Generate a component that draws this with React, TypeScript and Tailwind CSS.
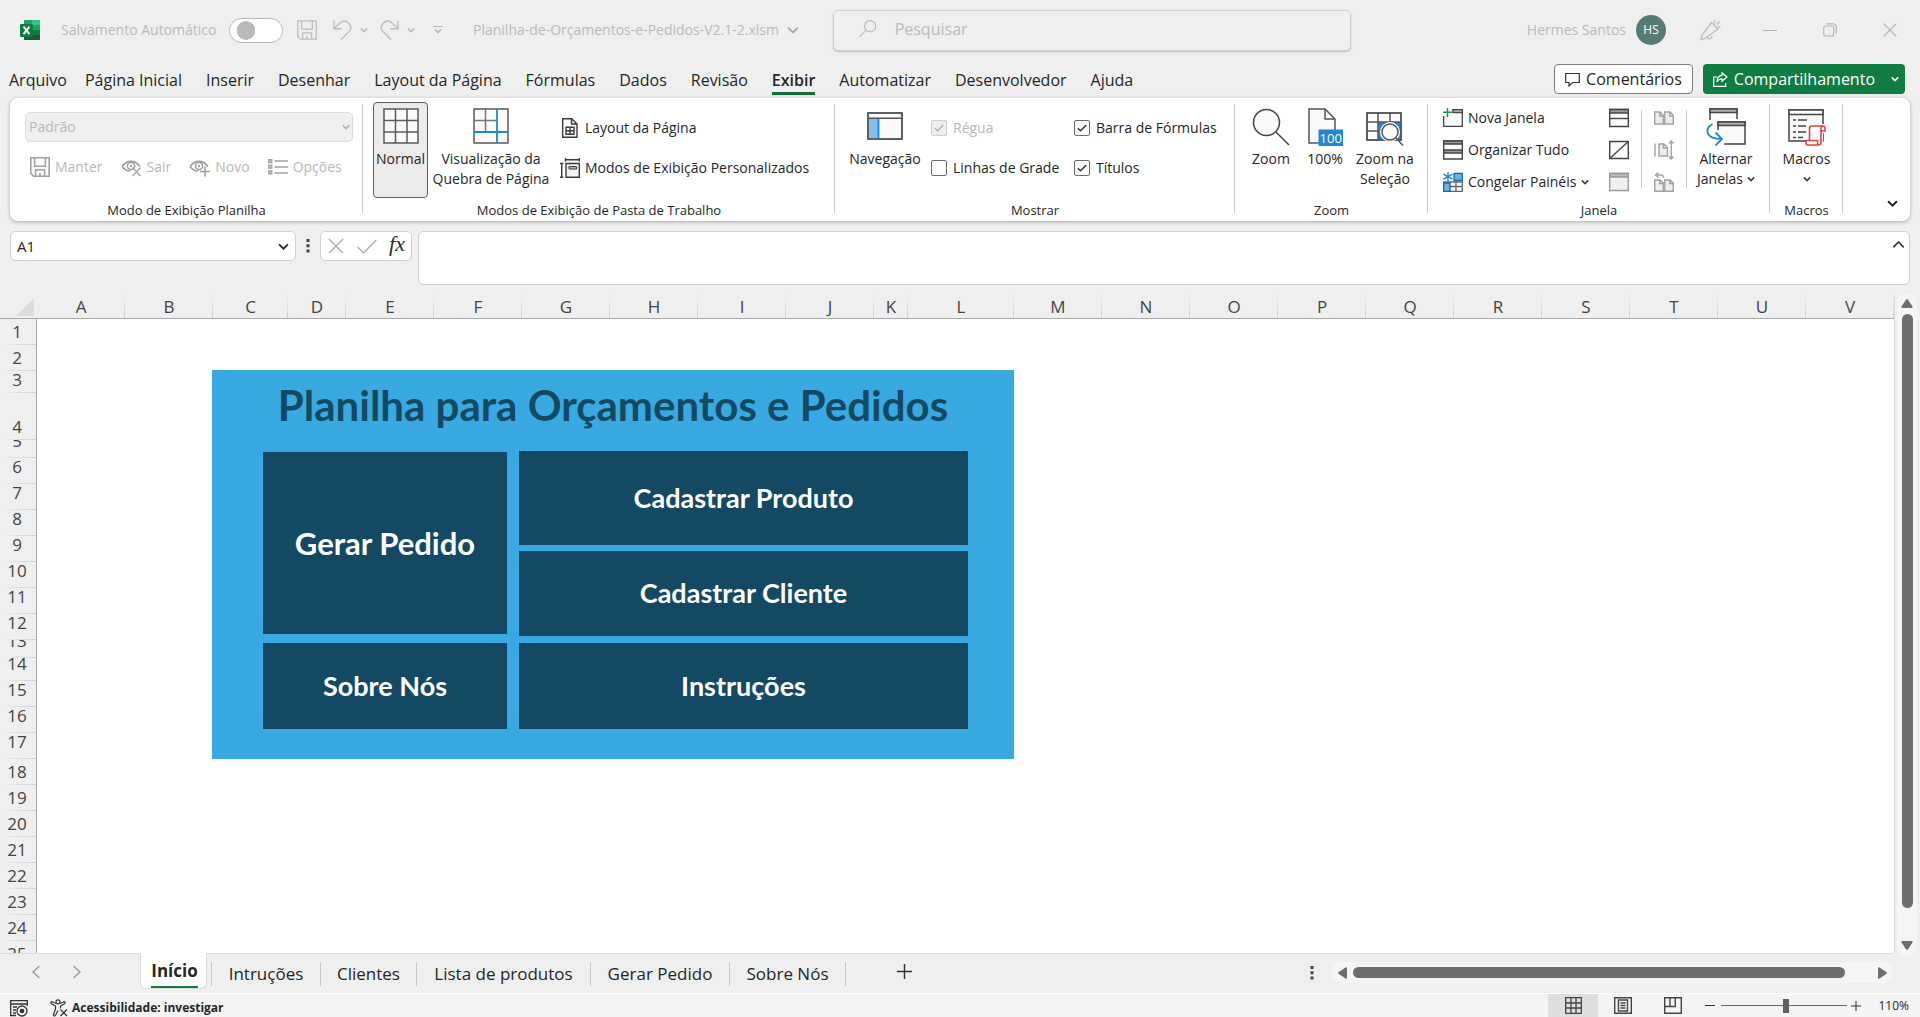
import { useState, type ReactNode } from "react";

const INK = "#3b3b3b";
const BLUE = "#1e88d2";

/* ---------- icons ---------- */

function Chevron({ size = 8, color = INK, width = 1.5, up = false }: { size?: number; color?: string; width?: number; up?: boolean }) {
  return (
    <svg width={size} height={size} viewBox="0 0 8 8" fill="none" stroke={color} strokeWidth={width} className="shrink-0" aria-hidden="true">
      <path d={up ? "M0.8 5.8 4 2.4l3.2 3.4" : "M0.8 2.4 4 5.6l3.2-3.2"} />
    </svg>
  );
}

function ExcelLogo() {
  return (
    <svg width="20" height="20" viewBox="0 0 20 20" aria-hidden="true">
      <rect x="4" y="0" width="16" height="20" rx="1" fill="#21a366" />
      <path d="M12 0h7a1 1 0 0 1 1 1v4h-8z" fill="#33c481" />
      <path d="M4 10h16v5H4z" fill="#107c41" />
      <path d="M4 15h16v4a1 1 0 0 1-1 1H5a1 1 0 0 1-1-1z" fill="#185c37" />
      <rect x="0" y="4" width="13" height="13" rx="1.2" fill="#107c41" />
      <path d="M3.6 6.7 9.4 14.2M9.4 6.7 3.6 14.2" stroke="#fff" strokeWidth="2" />
    </svg>
  );
}

function SaveIcon({ color = "#bdbdbd", width = 1.3 }: { color?: string; width?: number }) {
  return (
    <svg width="20" height="20" viewBox="0 0 20 20" fill="none" stroke={color} strokeWidth={width} aria-hidden="true">
      <path d="M.8.8h18.4v18.4H3.6L.8 16.4zM4.6.8v8.4h10.8V.8M5.6 19.2v-6.4h9v6.4M10 16v3" />
    </svg>
  );
}

function UndoIcon({ flip = false }: { flip?: boolean }) {
  return (
    <svg width="19" height="20" viewBox="0 0 19 20" fill="none" stroke="#bdbdbd" strokeWidth="1.4" className={flip ? "-scale-x-100" : ""} aria-hidden="true">
      <path d="M1 .5v8.3h8M1.3 8.3 7.5 2.6a6.3 6.3 0 0 1 9.2 8.3L8 19.6" />
    </svg>
  );
}

function EyeIcon({ mark }: { mark: "x" | "+" }) {
  return (
    <svg width="21" height="20" viewBox="0 0 21 20" fill="none" stroke="#a0a0a0" strokeWidth="1.6" aria-hidden="true">
      <path d="M1 9.5C4 5.5 7 4.4 10 4.4s6 1.1 9 5M1 9.500c2 2.600 4.500 4.300 8 4.700" />
      <circle cx="10" cy="9" r="3.6" />
      <circle cx="10" cy="9" r="1.2" fill="#a0a0a0" stroke="none" />
      {mark === "x" ? <path d="m11.500 10.500 8 8.500m0-8.500-8 8.500" strokeWidth="1.2" /> : <path d="M16 9.500v10M11 14.500h10" />}
    </svg>
  );
}

function ListIcon() {
  return (
    <svg width="20" height="20" viewBox="0 0 20 20" fill="none" stroke="#a0a0a0" strokeWidth="1.3" aria-hidden="true">
      <path d="M6.500 4H20M6.500 10H20M6.500 16H20" />
      <path d="M.8 2.600h3v3h-3zM.8 8.200h3v3h-3zM.8 13.800h3v3h-3z" fill="#c8c8c8" />
    </svg>
  );
}

function NormalViewIcon() {
  return (
    <svg width="36" height="36" viewBox="0 0 36 36" fill="#fafafa" stroke="#5a5a5a" strokeWidth="1.5" aria-hidden="true">
      <path d="M1 1h34v34H1z" />
      <path d="M12.500 1v34M24 1v34M1 12.500h34M1 24h34" />
    </svg>
  );
}

function PageBreakIcon() {
  return (
    <svg width="36" height="36" viewBox="0 0 36 36" fill="none" strokeWidth="1.5" aria-hidden="true">
      <path d="M1 1h34v34H1z" fill="#fafafa" stroke="#5a5a5a" />
      <path d="M12.500 1v22M1 12.500h22" stroke="#777" />
      <path d="M24 1v34M1 24h34" stroke={BLUE} strokeWidth="1.8" />
    </svg>
  );
}

function PageLayoutIcon() {
  return (
    <svg width="20" height="20" viewBox="0 0 20 20" fill="none" stroke={INK} strokeWidth="1.4" aria-hidden="true">
      <path d="M2.7.7h9l5.300 5.300v13.300H2.700zM11.500.7V6H17" />
      <path d="M6 9.300h8v7H6zM10 9.300v7M6 12.800h8" />
    </svg>
  );
}

function CustomViewsIcon() {
  return (
    <svg width="20" height="20" viewBox="0 0 20 20" fill="none" stroke={INK} strokeWidth="1.4" aria-hidden="true">
      <path d="M6 5.500h13.300v13.800H6z" fill="#f3f3f3" />
      <path d="M9 8.600h7.500v2.400H9z" fill="#bbb" strokeWidth="1" />
      <path d="M5.500 1.700h14M5.500 0v3.400M19.300 0v3.400M1.700 5v14.500M0 5.500h3.400M0 19.300h3.400" />
    </svg>
  );
}

function NavigationIcon() {
  return (
    <svg width="36" height="36" viewBox="0 0 36 36" fill="none" stroke="#555" strokeWidth="1.5" aria-hidden="true">
      <path d="M1 5h34v26H1z" fill="#fafafa" />
      <path d="M1.700 11h9.800v19.300H1.700z" fill="#83beec" stroke="none" />
      <path d="M11.500 10.500v20" stroke={BLUE} strokeWidth="1.8" />
      <path d="M1 10.300h34M1 5h34v26H1z" />
    </svg>
  );
}

function ZoomIcon() {
  return (
    <svg width="38" height="38" viewBox="0 0 38 38" fill="none" stroke="#444" strokeWidth="1.5" aria-hidden="true">
      <circle cx="14.500" cy="14.500" r="13" fill="#fafafa" />
      <path d="m24 24 13 13" />
    </svg>
  );
}

function Zoom100Icon() {
  return (
    <svg width="36" height="38" viewBox="0 0 36 38" fill="none" stroke="#555" strokeWidth="1.5" aria-hidden="true">
      <path d="M2 1h16l10 10v24H2z" fill="#fafafa" />
      <path d="M18 1v10h10" />
      <path d="M11.500 21.500H36V38H11.500z" fill={BLUE} stroke="none" />
      <text x="23.700" y="35" textAnchor="middle" fill="#fff" stroke="none" className="font-['Open_Sans',sans-serif] text-[13px]">100</text>
    </svg>
  );
}

function ZoomSelectionIcon() {
  return (
    <svg width="38" height="38" viewBox="0 0 38 38" fill="none" stroke="#555" strokeWidth="1.5" aria-hidden="true">
      <path d="M1 5h34v27H1z" fill="#fafafa" />
      <path d="M12 14h23v18H12z" fill={BLUE} stroke="none" />
      <path d="M12 5v27M24 5v9M1 14h34M1 23h11M1 5h34v27H1z" />
      <circle cx="24" cy="24" r="10" fill="#fff" stroke="none" />
      <circle cx="24" cy="24" r="8" fill="#fafafa" />
      <path d="m30 30 7 7.500" />
    </svg>
  );
}

function NewWindowIcon() {
  return (
    <svg width="20" height="20" viewBox="0 0 20 20" fill="none" stroke="#444" strokeWidth="1.3" aria-hidden="true">
      <path d="M9 1.700h10.300v16.600H.7V8" fill="#fafafa" />
      <path d="M10 1.700h9.300v3H10z" fill="#aaa" />
      <path d="M4.500 0v9M0 4.300h9" stroke="#1a9150" strokeWidth="1.5" />
    </svg>
  );
}

function ArrangeIcon() {
  return (
    <svg width="20" height="20" viewBox="0 0 20 20" fill="#fafafa" stroke="#444" strokeWidth="1.4" aria-hidden="true">
      <path d="M.7 1h18.600v18H.7z" />
      <path d="M.7 1h18.600v3H.7zM.7 10h18.600v3H.7z" fill="#999" />
    </svg>
  );
}

function FreezeIcon() {
  return (
    <svg width="20" height="20" viewBox="0 0 20 20" fill="none" stroke="#666" strokeWidth="1.3" aria-hidden="true">
      <path d="M.7 10h18.600v9.300H.7zM13 2v17M.7 14.500h18.600" fill="#fafafa" />
      <path d="M11 1.300h8.300v7H11zM.7 11H7v8.300H.7z" fill="#6db1e4" stroke="#1668a8" />
      <path d="M5 0v9.500M.5 2.200l9 5M9.500 2.200l-9 5" stroke={BLUE} strokeWidth="1.4" />
    </svg>
  );
}

function SplitIcon({ kind }: { kind: "split" | "hide" | "show" }) {
  const color = kind === "show" ? "#999" : "#444";
  return (
    <svg width="20" height="20" viewBox="0 0 20 20" fill={kind === "show" ? "#f0f0f0" : "#fafafa"} stroke={color} strokeWidth="1.4" aria-hidden="true">
      <path d="M.7 1.500h18.600v17H.7z" />
      {kind !== "hide" && <path d="M.7 1.500h18.600V5H.7z" fill={kind === "show" ? "#bbb" : "#999"} />}
      {kind === "split" && <path d="M.7 10.500h18.600" />}
      {kind === "hide" && <path d="m.7 18.500 18.600-17" />}
    </svg>
  );
}

function SideBySideIcon({ kind }: { kind: "pair" | "sync" | "reset" }) {
  return (
    <svg width="20" height="20" viewBox="0 0 20 20" fill="#ededed" stroke="#a3a3a3" strokeWidth="1.4" aria-hidden="true">
      {kind === "pair" && <path d="M.7 4H6l3.300 3.500V16H.7zM10.700 4H16l3.300 3.500V16h-8.600zM5.700 4v4h3.600M15.700 4v4h3.600" />}
      {kind === "sync" && (
        <>
          <path d="M5 4h5l3.500 3.500V16H5zM9.500 4v4h4M1 3.500v13" />
          <path d="M17.300 1v18M15 3.500 17.300 1l2.200 2.500M15 16.500l2.300 2.500 2.200-2.500" fill="none" />
        </>
      )}
      {kind === "reset" && (
        <>
          <path d="M.7 8H6l3.300 3v8.300H.7zM10.700 8H16l3.300 3v8.300h-8.600zM5.700 8v3.500h3.600M15.700 8v3.500h3.600" />
          <path d="M4.500.5 1.500 3l3 2.500M2 3h5c1.500 0 2.500 1 2.500 2.800" fill="none" />
        </>
      )}
    </svg>
  );
}

function SwitchWindowsIcon() {
  return (
    <svg width="40" height="38" viewBox="0 0 40 38" fill="none" stroke="#444" strokeWidth="1.5" aria-hidden="true">
      <path d="M4 12V1h27v10" fill="#fafafa" />
      <path d="M4 1h27v3.500H4z" fill="#b0b0b0" />
      <path d="M12 22v-8h27v22H18" fill="#fafafa" />
      <path d="M12 14h27v3.500H12z" fill="#b0b0b0" />
      <path d="M6.500 16C2 18.500 0 22.500 2.500 26.500 5 30.500 10 31 15.500 31M9.500 24.500l6.500 6.500-6.500 6.500" stroke={BLUE} strokeWidth="1.8" />
    </svg>
  );
}

function MacrosIcon() {
  return (
    <svg width="38" height="38" viewBox="0 0 38 38" fill="none" stroke="#444" strokeWidth="1.5" aria-hidden="true">
      <path d="M1 2h34v31H1z" fill="#fafafa" />
      <path d="M1 2h34v4.500H1z" fill="#fff" />
      <path d="M5 12h3M10 12h9M5 18h3M10 18h8M5 24h3M10 24h8M5 29.500h3M10 29.500h5" strokeWidth="1.3" />
      <path d="M23 18h12.500c2 0 2 5 0 5H33v12.500H21.500V20c0-1 .5-2 1.500-2z" fill="#fff" stroke="#fff" strokeWidth="4" />
      <path d="M21.500 32.500V20.500c0-1.500.5-2.500 2-2.500H35c1.500 0 2 1 2 2v3h-4v11c0 2-1 3-2.500 3H20c-1.500 0-2-1-2-2v-2.500h11.500V35c0 1.500.5 2 1.500 2" fill="#fff" stroke="#e8413c" strokeWidth="1.6" />
      <path d="M33 23v-3c0-1.200.8-2 2-2" stroke="#e8413c" strokeWidth="1.6" />
    </svg>
  );
}

/* ---------- ribbon parts ---------- */

function Group({ label, className, children }: { label: string; className: string; children: ReactNode }) {
  return (
    <section className={`relative flex shrink-0 flex-col ${className}`}>
      <div className="flex h-[102px] items-start pt-1">{children}</div>
      <h2 className="text-center text-[13px] leading-5">{label}</h2>
      <span className="absolute top-1.5 right-0 bottom-2 w-px bg-[#c9c9c9]" />
    </section>
  );
}

function BigButton({ icon, lines, className, active = false, chevron }: { icon: ReactNode; lines: string[]; className: string; active?: boolean; chevron?: "inline" | "below" }) {
  return (
    <button
      aria-pressed={active || undefined}
      className={`flex h-24 shrink-0 flex-col items-center rounded border pt-[5px] text-sm leading-5 whitespace-nowrap ${active ? "border-[#5c5c5c] bg-[#ebebeb]" : "border-transparent"} ${className}`}
    >
      <span className="mb-[5px] flex h-9 justify-center">{icon}</span>
      {lines.map((line, i) => (
        <span key={line} className="flex items-center gap-1">
          {line}
          {chevron === "inline" && i === lines.length - 1 && <Chevron />}
        </span>
      ))}
      {chevron === "below" && (
        <span className="flex h-5 items-center">
          <Chevron />
        </span>
      )}
    </button>
  );
}

function SmallButton({ icon, label, disabled = false, chevron = false }: { icon: ReactNode; label: string; disabled?: boolean; chevron?: boolean }) {
  return (
    <button disabled={disabled} className="flex h-5 items-center gap-[5px] text-sm leading-5 whitespace-nowrap disabled:text-[#b8b8b8]">
      {icon}
      {label}
      {chevron && <Chevron />}
    </button>
  );
}

function Check({ label, checked, disabled = false }: { label: string; checked: boolean; disabled?: boolean }) {
  const [on, setOn] = useState(checked);
  return (
    <label className={`flex h-5 items-center gap-1.5 text-sm leading-5 whitespace-nowrap ${disabled ? "text-[#b8b8b8]" : ""}`}>
      <span className="relative grid size-4 shrink-0 place-items-center">
        <input
          type="checkbox"
          checked={on}
          disabled={disabled}
          onChange={(e) => setOn(e.target.checked)}
          className="size-4 appearance-none rounded-xs border border-[#6b6b6b] bg-white disabled:border-[#cfcfcf] disabled:bg-[#efefef]"
        />
        {on && (
          <svg width="10" height="10" viewBox="0 0 10 10" fill="none" stroke={disabled ? "#b0b0b0" : "#333"} strokeWidth="1.5" className="pointer-events-none absolute" aria-hidden="true">
            <path d="m.8 5.200 2.800 2.600L9.200 2" />
          </svg>
        )}
      </span>
      {label}
    </label>
  );
}

/* ---------- sections ---------- */

function TitleBar() {
  return (
    <header className="grid h-[60px] grid-cols-[833fr_518fr_569fr] text-sm text-[#bababa]">
      <div className="flex items-center pl-5">
        <ExcelLogo />
        <label className="ml-[21px] flex items-center gap-2 whitespace-nowrap">
          <span className="w-40">Salvamento Automático</span>
          <input
            type="checkbox"
            role="switch"
            className="h-[25px] w-[54px] appearance-none rounded-full border border-[#bababa] bg-white bg-[radial-gradient(circle_at_16px_center,#bababa_9px,transparent_9.5px)]"
          />
        </label>
        <button aria-label="Salvar" className="ml-3.5"><SaveIcon /></button>
        <button aria-label="Desfazer" className="ml-4 flex items-center gap-2"><UndoIcon /><Chevron color="#bababa" /></button>
        <button aria-label="Refazer" className="ml-3 flex items-center gap-2"><UndoIcon flip /><Chevron color="#bababa" /></button>
        <button aria-label="Personalizar" className="ml-[18px] flex flex-col items-center">
          <span className="h-px w-2.5 bg-[#bababa]" />
          <Chevron color="#bababa" />
        </button>
        <button className="ml-[30px] flex items-center gap-2 text-sm whitespace-nowrap">
          Planilha-de-Orçamentos-e-Pedidos-V2.1-2.xlsm
          <Chevron size={12} color="#a8a8a8" width={1.2} />
        </button>
      </div>
      <label className="mt-2.5 flex h-[41px] items-center gap-[18px] rounded-[5px] border border-[#cfcfcf] pb-1 pl-[25px] shadow-[0_1px_2px_rgba(0,0,0,0.22)]">
        <svg width="19" height="19" viewBox="0 0 19 19" fill="none" stroke="#bababa" strokeWidth="1.2" aria-hidden="true">
          <circle cx="12" cy="7" r="6" />
          <path d="M7.800 11.200.5 18.500" />
        </svg>
        <input type="search" aria-label="Pesquisar" placeholder="Pesquisar" className="w-full bg-transparent text-base outline-none placeholder:text-[#bababa]" />
      </label>
      <div className="flex items-center justify-end pr-[23px]">
        <span className="whitespace-nowrap">Hermes Santos</span>
        <span className="ml-2.5 grid size-[30px] place-items-center rounded-full bg-[#567b72] text-xs text-white">HS</span>
        <button aria-label="Novidades" className="ml-[34px]">
          <svg width="21" height="21" viewBox="0 0 21 21" fill="none" stroke="#bababa" strokeWidth="1.3" aria-hidden="true">
            <path d="m11.500 2.500 6.500 6.500L5 18.500l-4.200 1.200 1.300-4.500zM7 17.200c1 2.500 4.500 2.300 5-1M14.500 3.500V.5M17 4.500l2.500-3M18 7l2.500-.5" />
          </svg>
        </button>
        <button aria-label="Minimizar" className="ml-[42px] h-px w-3.5 bg-[#b0b0b0]" />
        <button aria-label="Restaurar" className="ml-[46px]">
          <svg width="14" height="14" viewBox="0 0 14 14" fill="none" stroke="#b5b5b5" strokeWidth="1.2" aria-hidden="true">
            <rect x=".7" y="3" width="10" height="10" rx="2" />
            <path d="M3.500.8H10A3.200 3.200 0 0 1 13.300 4v6.500" />
          </svg>
        </button>
        <button aria-label="Fechar" className="ml-[46px]">
          <svg width="14" height="14" viewBox="0 0 14 14" stroke="#b0b0b0" strokeWidth="1.2" aria-hidden="true">
            <path d="m.7.7 12.600 12.600M13.300.7.7 13.300" />
          </svg>
        </button>
      </div>
    </header>
  );
}

const MENU = ["Arquivo", "Página Inicial", "Inserir", "Desenhar", "Layout da Página", "Fórmulas", "Dados", "Revisão", "Exibir", "Automatizar", "Desenvolvedor", "Ajuda"];

function MenuBar() {
  return (
    <div className="flex h-[38px] items-start justify-between pr-[15px] pl-[9px]">
      <nav className="flex gap-6 pt-2 text-base leading-6 whitespace-nowrap">
        {MENU.map((item) => (
          <button key={item} className={item === "Exibir" ? "border-b-[3px] border-[#0f703b] font-semibold" : "border-b-[3px] border-transparent first:-mr-1.5"}>
            {item}
          </button>
        ))}
      </nav>
      <div className="flex gap-2.5 pt-1 text-base">
        <button className="flex h-[30px] items-center gap-1.5 rounded border border-[#7a7a7a] bg-white px-2.5">
          <svg width="15" height="15" viewBox="0 0 15 15" fill="none" stroke="#333" strokeWidth="1.2" aria-hidden="true">
            <path d="M.7 1.500h13.600v9H7.500L4 14v-3.500H.7z" />
          </svg>
          Comentários
        </button>
        <button className="flex h-[30px] items-center gap-1.5 rounded bg-[#107c41] pr-1.5 pl-2.5 text-white">
          <svg width="15" height="15" viewBox="0 0 15 15" fill="none" stroke="#fff" strokeWidth="1.2" aria-hidden="true">
            <path d="M4 5H.7v9.300h12V11M9 .8l5 4.200-5 4.200V6.800C6.500 6.800 5 7.800 4 10c0-4 2-6.500 5-6.700z" />
          </svg>
          Compartilhamento
          <span className="ml-2.5"><Chevron color="#fff" /></span>
        </button>
      </div>
    </div>
  );
}

function Ribbon() {
  return (
    <div className="mx-2.5 flex h-[123px] shrink-0 rounded-lg bg-white shadow-[0_1px_4px_rgba(0,0,0,0.28)]">
      <Group label="Modo de Exibição Planilha" className="w-[353px] pr-1 pl-1">
        <div className="w-full pt-2.5 pr-1.5 pl-[11px]">
          <div className="relative">
            <select disabled aria-label="Modo de exibição" className="h-[30px] w-full appearance-none rounded-[5px] border border-[#dcdcdc] bg-[#efefef] pl-[3px] text-sm text-[#b8b8b8] opacity-100">
              <option>Padrão</option>
            </select>
            <span className="pointer-events-none absolute top-[11px] right-[3px]"><Chevron color="#b0b0b0" /></span>
          </div>
          <div className="mt-[15px] flex gap-[18px] pl-[5px]">
            <SmallButton disabled icon={<SaveIcon color="#a0a0a0" width={1.6} />} label="Manter" />
            <SmallButton disabled icon={<EyeIcon mark="x" />} label="Sair" />
            <SmallButton disabled icon={<EyeIcon mark="+" />} label="Novo" />
            <SmallButton disabled icon={<ListIcon />} label="Opções" />
          </div>
        </div>
      </Group>
      <Group label="Modos de Exibição de Pasta de Trabalho" className="w-[472px]">
        <BigButton active className="ml-2.5 w-[55px]" icon={<NormalViewIcon />} lines={["Normal"]} />
        <BigButton className="ml-1 w-[118px]" icon={<PageBreakIcon />} lines={["Visualização da", "Quebra de Página"]} />
        <div className="ml-2.5 flex flex-col gap-5 pt-4">
          <SmallButton icon={<PageLayoutIcon />} label="Layout da Página" />
          <SmallButton icon={<CustomViewsIcon />} label="Modos de Exibição Personalizados" />
        </div>
      </Group>
      <Group label="Mostrar" className="w-[400px]">
        <BigButton className="ml-3 w-[76px]" icon={<NavigationIcon />} lines={["Navegação"]} />
        <div className="ml-2 flex w-[143px] flex-col gap-5 pt-4">
          <Check label="Régua" checked disabled />
          <Check label="Linhas de Grade" checked={false} />
        </div>
        <div className="flex flex-col gap-5 pt-4">
          <Check label="Barra de Fórmulas" checked />
          <Check label="Títulos" checked />
        </div>
      </Group>
      <Group label="Zoom" className="w-[193px]">
        <BigButton className="ml-3.5 w-11" icon={<ZoomIcon />} lines={["Zoom"]} />
        <BigButton className="ml-2.5 w-11" icon={<Zoom100Icon />} lines={["100%"]} />
        <BigButton className="ml-2 w-[60px]" icon={<ZoomSelectionIcon />} lines={["Zoom na", "Seleção"]} />
      </Group>
      <Group label="Janela" className="w-[342px]">
        <div className="ml-[15px] flex w-[166px] flex-col gap-3 pt-1.5">
          <SmallButton icon={<NewWindowIcon />} label="Nova Janela" />
          <SmallButton icon={<ArrangeIcon />} label="Organizar Tudo" />
          <SmallButton chevron icon={<FreezeIcon />} label="Congelar Painéis" />
        </div>
        <div className="flex flex-col gap-3 pt-1.5">
          <button aria-label="Dividir"><SplitIcon kind="split" /></button>
          <button aria-label="Ocultar"><SplitIcon kind="hide" /></button>
          <button aria-label="Reexibir" disabled><SplitIcon kind="show" /></button>
        </div>
        <span className="mt-2 ml-3 h-[78px] w-px bg-[#c9c9c9]" />
        <div className="ml-3 flex flex-col gap-3 pt-1.5">
          <button aria-label="Exibir lado a lado" disabled><SideBySideIcon kind="pair" /></button>
          <button aria-label="Rolagem sincronizada" disabled><SideBySideIcon kind="sync" /></button>
          <button aria-label="Redefinir posição" disabled><SideBySideIcon kind="reset" /></button>
        </div>
        <span className="mt-2 ml-3 h-[78px] w-px bg-[#c9c9c9]" />
        <BigButton className="ml-2 w-[62px]" chevron="inline" icon={<SwitchWindowsIcon />} lines={["Alternar", "Janelas"]} />
      </Group>
      <Group label="Macros" className="w-[73px]">
        <BigButton className="mx-auto w-[60px]" chevron="below" icon={<MacrosIcon />} lines={["Macros"]} />
      </Group>
      <div className="flex flex-1 items-end justify-end pr-3 pb-3">
        <button aria-label="Recolher faixa de opções"><Chevron size={11} width={1.4} color="#222" /></button>
      </div>
    </div>
  );
}

function Dots() {
  return (
    <svg width="4" height="14" viewBox="0 0 4 14" fill="#444" aria-hidden="true">
      <path d="M.5 0h3v3h-3zM.5 5.200h3v3h-3zM.5 10.400h3v3h-3z" />
    </svg>
  );
}

function FormulaBar() {
  return (
    <div className="mt-2.5 flex h-[54px] shrink-0 items-start px-2.5">
      <div className="flex h-[30px] w-[286px] items-center rounded-[5px] border border-[#cfcfcf] bg-white px-1.5">
        <input aria-label="Caixa de nome" defaultValue="A1" className="min-w-0 flex-1 text-[15px] outline-none" />
        <button aria-label="Abrir caixa de nome"><Chevron size={11} width={1.3} color="#222" /></button>
      </div>
      <span className="ml-2.5 flex h-[30px] items-center"><Dots /></span>
      <div className="ml-2.5 flex h-[30px] w-[92px] items-center justify-between rounded-[5px] border border-[#cfcfcf] bg-white pr-1.5 pl-[7px]">
        <button aria-label="Cancelar">
          <svg width="16" height="16" viewBox="0 0 16 16" stroke="#a8a8a8" strokeWidth="1.2" aria-hidden="true"><path d="m1 1 14 14M15 1 1 15" /></svg>
        </button>
        <button aria-label="Inserir">
          <svg width="20" height="15" viewBox="0 0 20 15" fill="none" stroke="#a8a8a8" strokeWidth="1.2" aria-hidden="true"><path d="m.7 8 6 6L19.300 1" /></svg>
        </button>
        <button className="pb-1 font-['Liberation_Serif',serif] text-[22px] leading-6 text-[#2b2b2b] italic">fx</button>
      </div>
      <div className="ml-1.5 flex h-full flex-1 items-start rounded-[5px] border border-[#cfcfcf] bg-white pr-1">
        <textarea aria-label="Barra de fórmulas" className="h-full flex-1 resize-none outline-none" />
        <button aria-label="Recolher barra de fórmulas" className="mt-1.5"><Chevron up size={13} width={1} /></button>
      </div>
    </div>
  );
}

const COLS: [string, string][] = [
  ["A", "w-[88px]"], ["B", "w-[88px]"], ["C", "w-[75px]"], ["D", "w-[58px]"], ["E", "w-[88px]"], ["F", "w-[88px]"],
  ["G", "w-[88px]"], ["H", "w-[88px]"], ["I", "w-[88px]"], ["J", "w-[88px]"], ["K", "w-[34px]"], ["L", "w-[106px]"],
  ["M", "w-[88px]"], ["N", "w-[88px]"], ["O", "w-[88px]"], ["P", "w-[88px]"], ["Q", "w-[88px]"], ["R", "w-[88px]"],
  ["S", "w-[88px]"], ["T", "w-[88px]"], ["U", "w-[88px]"], ["V", "w-[88px]"],
];

const ROW_HEIGHTS: Record<number, string> = { 3: "h-[22px]", 4: "h-[47px]", 5: "h-[18px]", 13: "h-[18px]", 14: "h-[23px]" };

const ROWS = Array.from({ length: 25 }, (_, i) => {
  const n = i + 1;
  return { n, height: ROW_HEIGHTS[n] ?? "h-[26px]", raised: n >= 5 && n <= 17 };
});

function PanelButton({ label, className }: { label: string; className: string }) {
  return <button className={`bg-[#144964] font-bold text-white ${className}`}>{label}</button>;
}

function MenuPanel() {
  return (
    <div className="absolute top-[75px] left-[212px] h-[389px] w-[802px] bg-[#38aae1] font-['Lato','Open_Sans',sans-serif] text-[27px]">
      <h1 className="pt-2.5 text-center text-[42px] leading-[50px] font-bold whitespace-nowrap text-[#144964]">Planilha para Orçamentos e Pedidos</h1>
      <div className="mt-[21px] flex h-[278px] gap-3 pr-[46px] pl-[51px]">
        <div className="flex w-[244px] flex-col gap-[9px] pt-px">
          <PanelButton label="Gerar Pedido" className="h-[182px] text-[31px]" />
          <PanelButton label="Sobre Nós" className="h-[86px]" />
        </div>
        <div className="flex flex-1 flex-col">
          <PanelButton label="Cadastrar Produto" className="h-[94px]" />
          <PanelButton label="Cadastrar Cliente" className="mt-1.5 h-[85px]" />
          <PanelButton label="Instruções" className="mt-[7px] h-[86px]" />
        </div>
      </div>
    </div>
  );
}

function Sheet() {
  return (
    <div className="mt-2.5 flex min-h-0 flex-1">
      <main className="relative min-w-0 flex-1 overflow-hidden border-r border-[#dcdcdc] bg-white">
        <table className="w-[1894px] table-fixed border-separate border-spacing-0 text-[17px] text-[#444]">
          <thead>
            <tr className="h-6">
              <th className="h-6 w-[37px] border-b border-[#ababab] bg-[#efefef] p-0">
                <svg width="19" height="18" viewBox="0 0 19 18" className="mr-[3px] ml-auto" aria-hidden="true"><path d="M19 0v18H1z" fill="#dcdcdc" /></svg>
              </th>
              {COLS.map(([name, width]) => (
                <th key={name} scope="col" className={`border-b border-[#ababab] bg-[#efefef] bg-[linear-gradient(to_bottom,#efefef,#cfcfcf)] bg-[length:1px_100%] bg-right bg-no-repeat p-0 leading-5 font-normal ${width}`}>
                  {name}
                </th>
              ))}
            </tr>
          </thead>
          <tbody>
            {ROWS.map(({ n, height, raised }) => (
              <tr key={n} className={height}>
                <th scope="row" className="border-r border-[#ababab] bg-[#efefef] bg-[linear-gradient(to_right,#efefef,#cfcfcf)] bg-[length:100%_1px] bg-bottom bg-no-repeat p-0 font-normal">
                  <div className={`flex flex-col justify-end overflow-hidden pr-0.5 leading-5 ${height} ${raised ? "pb-[7px]" : "pb-[3px]"}`}>
                    <span className="h-5 shrink-0">{n}</span>
                  </div>
                </th>
                {COLS.map(([name]) => (
                  <td key={name} className="p-0" />
                ))}
              </tr>
            ))}
          </tbody>
        </table>
        <MenuPanel />
      </main>
      <div className="flex w-[25px] justify-end pr-[3px]">
        <div className="-mt-0.5 -mb-[3px] flex w-5 flex-col items-center rounded-full bg-[#f5f5f5] py-1.5">
          <button aria-label="Rolar para cima"><svg width="12" height="9" viewBox="0 0 12 9" fill="#6e6e6e" aria-hidden="true"><path d="M5 .8a1.200 1.200 0 0 1 2 0l4.500 6.700c.4.7 0 1.500-.8 1.500H1.300C.5 9 .1 8.200.5 7.500z" /></svg></button>
          <div className="mt-1.5 w-[11px] flex-1 rounded-full bg-[#6e6e6e]" />
          <button aria-label="Rolar para baixo" className="mt-[33px]"><svg width="12" height="9" viewBox="0 0 12 9" fill="#6e6e6e" aria-hidden="true"><path d="M5 8.200a1.200 1.200 0 0 0 2 0l4.500-6.700C11.900.8 11.500 0 10.700 0H1.300C.5 0 .1.8.5 1.500z" /></svg></button>
        </div>
      </div>
    </div>
  );
}

const SHEETS: [string, string][] = [
  ["Intruções", "w-[109px]"], ["Clientes", "w-[96px]"], ["Lista de produtos", "w-[174px]"], ["Gerar Pedido", "w-[139px]"], ["Sobre Nós", "w-[116px]"],
];

function SheetTabs() {
  return (
    <div className="flex h-10 shrink-0 items-start text-[17px]">
      <div className="flex h-9 w-[140px] items-center gap-[31px] border-t border-[#dcdcdc] pl-[31px]">
        <button aria-label="Planilha anterior"><svg width="10" height="14" viewBox="0 0 10 14" fill="none" stroke="#9a9a9a" strokeWidth="1.4" aria-hidden="true"><path d="M8.500 1 2 7l6.500 6" /></svg></button>
        <button aria-label="Próxima planilha"><svg width="10" height="14" viewBox="0 0 10 14" fill="none" stroke="#9a9a9a" strokeWidth="1.4" aria-hidden="true"><path d="M1.500 1 8 7l-6.500 6" /></svg></button>
      </div>
      <button className="flex h-9 w-[67px] justify-center rounded-b-md border border-t-0 border-[#dcdcdc] bg-white pt-1.5 pl-0.5">
        <span className="border-b-2 border-[#107c41] leading-6 font-bold">Início</span>
      </button>
      <div className="flex h-10 flex-1 items-start border-t border-[#dcdcdc]">
        <span className="mt-2 ml-1 h-6 w-px bg-[#c6c6c6]" />
        {SHEETS.map(([name, width]) => (
          <button key={name} className={`mt-2 h-6 border-r border-[#c6c6c6] leading-6 whitespace-nowrap ${width}`}>{name}</button>
        ))}
        <button aria-label="Nova planilha" className="mt-2.5 ml-[51px]">
          <svg width="15" height="15" viewBox="0 0 15 15" stroke="#333" strokeWidth="1.5" aria-hidden="true"><path d="M7.500 0v15M0 7.500h15" /></svg>
        </button>
      </div>
      <div className="flex h-10 w-[583px] items-start border-t border-[#dcdcdc] pt-2">
        <span className="mt-1 mr-[18px]"><Dots /></span>
        <div className="flex h-[21px] flex-1 items-center rounded-full bg-[#f5f5f5] px-1.5">
          <button aria-label="Rolar para a esquerda"><svg width="9" height="12" viewBox="0 0 9 12" fill="#6e6e6e" aria-hidden="true"><path d="M.8 5a1.200 1.200 0 0 0 0 2l6.700 4.500c.7.4 1.500 0 1.500-.8V1.300C9 .5 8.200.1 7.500.5z" /></svg></button>
          <div className="ml-1.5 h-[11px] flex-1 rounded-full bg-[#6e6e6e]" />
          <button aria-label="Rolar para a direita" className="ml-[33px]"><svg width="9" height="12" viewBox="0 0 9 12" fill="#6e6e6e" aria-hidden="true"><path d="M8.200 5a1.200 1.200 0 0 1 0 2l-6.700 4.500C.8 11.900 0 11.500 0 10.700V1.300C0 .5.8.1 1.500.5z" /></svg></button>
        </div>
      </div>
      <span className="w-[27px]" />
    </div>
  );
}

function StatusBar() {
  return (
    <footer className="flex h-6 shrink-0 items-center border-t border-white bg-[#f4f4f4] pr-[11px] pl-2.5">
      <button aria-label="Gravar macro" className="mt-1.5">
        <svg width="18" height="17" viewBox="0 0 18 17" fill="none" stroke="#333" strokeWidth="1.3" aria-hidden="true">
          <path d="M6 15.500H.7V.7h16.600V6M.7 4h16.600M3 7h4M3 10h3M3 13h3" />
          <circle cx="12" cy="11" r="5" />
          <circle cx="12" cy="11" r="2.3" fill="#333" stroke="none" />
        </svg>
      </button>
      <button className="ml-[22px] flex items-center gap-1 pt-1 text-xs font-bold whitespace-nowrap">
        <svg width="18" height="18" viewBox="0 0 18 18" fill="none" stroke="#333" strokeWidth="1.2" aria-hidden="true">
          <circle cx="8" cy="2.8" r="2" />
          <path d="M5.800 4.500 2.300 2.800c-1.200-.4-2 1.200-.8 1.900L5.500 7v3l-2 5.500c-.3 1.500 1.300 2 2 .8L8 11.500M10.200 4.500l3.500-1.700c1.200-.4 2 1.200.8 1.900L10.500 7v2.500M10.500 10.500l6.500 6.500M17 10.500 10.500 17" />
        </svg>
        Acessibilidade: investigar
      </button>
      <div className="ml-auto flex h-full items-center">
        <button aria-label="Normal" className="grid h-full w-[50px] place-items-center bg-[#dedede]">
          <svg width="17" height="17" viewBox="0 0 17 17" fill="none" stroke="#444" strokeWidth="1.3" aria-hidden="true"><path d="M.7.7h15.600v15.600H.7zM6 .7v15.600M11 .7v15.600M.7 6h15.600M.7 11h15.600" /></svg>
        </button>
        <button aria-label="Layout da Página" className="grid w-[50px] place-items-center">
          <svg width="18" height="17" viewBox="0 0 18 17" fill="none" stroke="#444" strokeWidth="1.4" aria-hidden="true"><path d="M.7.7h16.600v15.600H.7zM4.500 3h9v11h-9zM6.500 6h5M6.500 8.500h5M6.500 11h5" /></svg>
        </button>
        <button aria-label="Visualização da Quebra de Página" className="grid w-[50px] place-items-center">
          <svg width="18" height="17" viewBox="0 0 18 17" fill="none" stroke="#444" strokeWidth="1.4" aria-hidden="true"><path d="M.7.7h16.600v15.600H.7zM.7 9.500h10.600V.7M6 .7v8.800" /></svg>
        </button>
        <button aria-label="Reduzir" className="ml-[7px] h-px w-2.5 bg-[#333]" />
        <input
          type="range"
          aria-label="Zoom"
          defaultValue={52}
          className="ml-1.5 h-4 w-[126px] appearance-none bg-[linear-gradient(#666,#666)] bg-[length:100%_1px] bg-center bg-no-repeat [&::-webkit-slider-thumb]:h-3.5 [&::-webkit-slider-thumb]:w-1.5 [&::-webkit-slider-thumb]:appearance-none [&::-webkit-slider-thumb]:bg-[#5f5f5f]"
        />
        <button aria-label="Ampliar" className="ml-1">
          <svg width="10" height="10" viewBox="0 0 10 10" stroke="#333" strokeWidth="1" aria-hidden="true"><path d="M5 0v10M0 5h10" /></svg>
        </button>
        <button className="ml-3.5 w-[34px] text-right text-xs">110%</button>
      </div>
    </footer>
  );
}

export default function App() {
  return (
    <div className="flex h-screen min-w-[1280px] flex-col overflow-hidden bg-[#efefef] font-['Open_Sans','Noto_Sans',sans-serif] text-[#262626]">
      <TitleBar />
      <MenuBar />
      <Ribbon />
      <FormulaBar />
      <Sheet />
      <SheetTabs />
      <StatusBar />
    </div>
  );
}
